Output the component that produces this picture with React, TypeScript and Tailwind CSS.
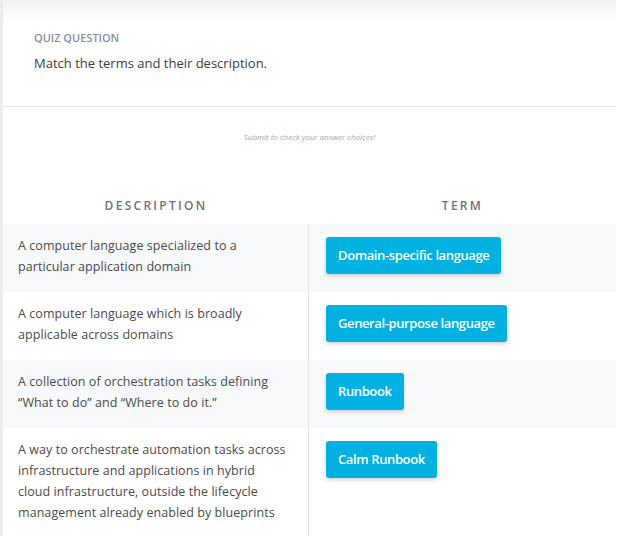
const rows = [
  {
    description: "A computer language specialized to a particular application domain",
    term: "Domain-specific language",
  },
  {
    description: "A computer language which is broadly applicable across domains",
    term: "General-purpose language",
  },
  {
    description: "A collection of orchestration tasks defining \u201cWhat to do\u201d and \u201cWhere to do it.\u201d",
    term: "Runbook",
  },
  {
    description:
      "A way to orchestrate automation tasks across infrastructure and applications in hybrid cloud infrastructure, outside the lifecycle management already enabled by blueprints",
    term: "Calm Runbook",
  },
];

const App = () => {
  return (
    <div className="min-h-[536px] w-[629px] bg-white font-['Open_Sans',sans-serif]">
      <div className="w-[616px] min-h-[536px] border-l-[3px] border-[#ebecee] bg-white">
        <div className="h-[107px] border-b border-[#e3e4e6] bg-gradient-to-b from-[#f2f2f2] via-white via-[22%] to-white px-[31px] pt-[31px]">
          <div className="text-[11px] font-semibold uppercase leading-[14px] text-[#7f92a6]">
            Quiz Question
          </div>
          <div className="mt-[9px] text-[13px] leading-[18px] text-[#3c3c3c]">
            Match the terms and their description.
          </div>
        </div>

        <div className="pt-[24px] text-center text-[8px] italic leading-[11px] text-[#a5a5a5]">
          Submit to check your answer choices!
        </div>

        <div className="mt-[56px] grid grid-cols-[306px_1fr] pb-[10px]">
          <div className="text-center text-[12px] font-semibold uppercase leading-[16px] tracking-[0.19em] text-[#6f7378]">
            Description
          </div>
          <div className="text-center text-[12px] font-semibold uppercase leading-[16px] tracking-[0.19em] text-[#6f7378]">
            Term
          </div>
        </div>

        <div className="flex flex-col">
          {rows.map((row, i) => (
            <div
              key={row.term}
              className={`grid grid-cols-[306px_1fr] ${i % 2 === 0 ? "bg-[#f7f9fa]" : "bg-white"}`}
            >
              <div className="border-r border-[#dfe1e3] pl-[15px] pr-[22px] pt-[11px] pb-[15px] text-[12.5px] leading-[21px] tracking-[0.005em] text-[#4a4a4a]">
                {row.description}
              </div>
              <div className="px-[17px] pt-[13px]">
                <button
                  type="button"
                  className="h-[37px] rounded-[3px] bg-[#00b1e1] px-[12px] text-[13px] font-semibold tracking-[-0.03em] text-white shadow-[0_2px_4px_rgba(0,0,0,0.18)]"
                >
                  {row.term}
                </button>
              </div>
            </div>
          ))}
        </div>
      </div>
    </div>
  );
};

export default App;
